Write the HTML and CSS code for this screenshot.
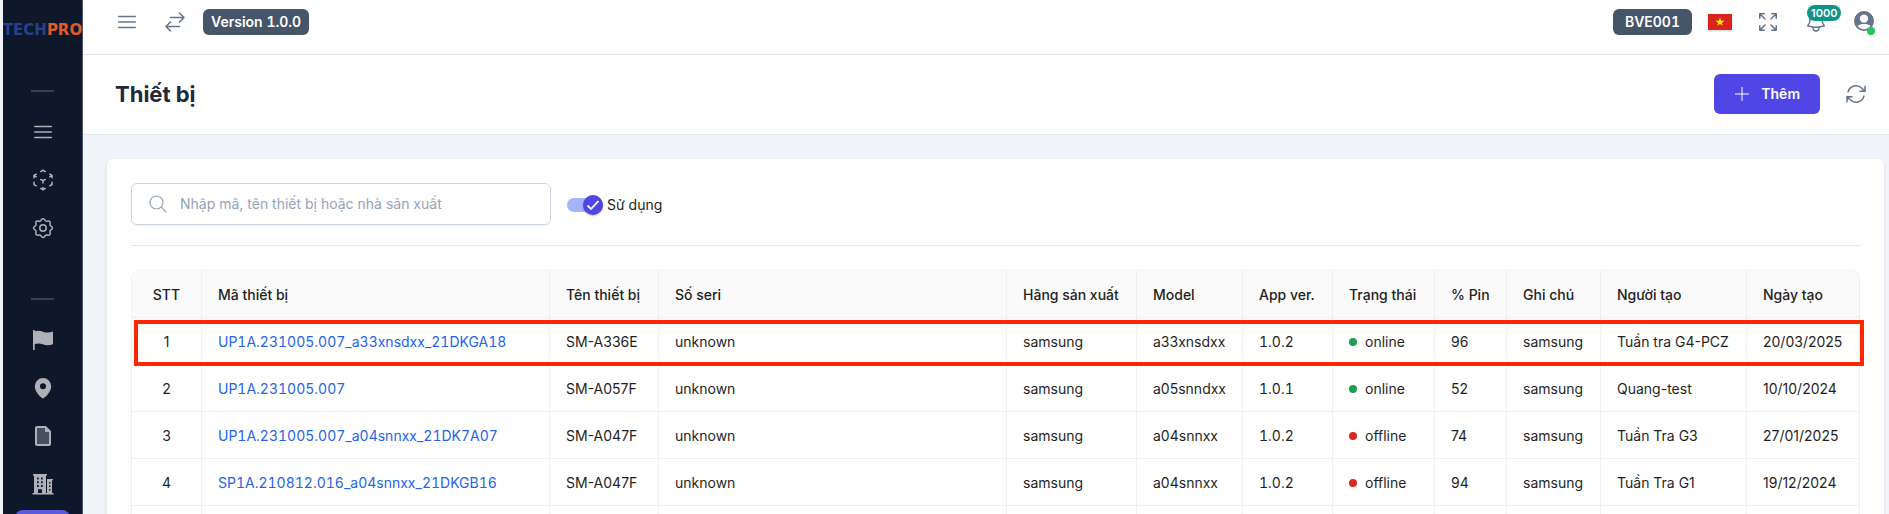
FILE: index.html
```html
<!DOCTYPE html>
<html lang="vi">
<head>
<meta charset="utf-8">
<meta name="viewport" content="width=device-width, initial-scale=1">
<title>Thiết bị</title>
<link rel="stylesheet" href="styles.css">
</head>
<body>
<div class="app">
  <nav class="sidebar" aria-label="Menu">
    <a class="logo" href="#"><span class="logo-tech">TECH</span><span class="logo-pro">PRO</span></a>
    <hr class="nav-rule">
    <ul class="nav-group">
      <li><a class="nav-item" href="#" aria-label="Danh mục"><svg class="icon" viewBox="0 0 24 24"><path d="M3.75 6.5h16.5M3.75 12h16.5M3.75 17.5h16.5"/></svg></a></li>
      <li><a class="nav-item" href="#" aria-label="Thiết bị"><svg class="icon" viewBox="0 0 24 24"><path d="M21 7.5l-2.25-1.313M21 7.5v2.25m0-2.25l-2.25 1.313M3 7.5l2.25-1.313M3 7.5l2.25 1.313M3 7.5v2.25m9 3l2.25-1.313M12 12.75l-2.25-1.313M12 12.75V15m0 6.75l2.25-1.313M12 21.75V19.5m0 2.25l-2.25-1.313m0-16.875L12 2.25l2.25 1.313M21 14.25v2.25l-2.25 1.313m-13.5 0L3 16.5v-2.25"/></svg></a></li>
      <li><a class="nav-item" href="#" aria-label="Cài đặt"><svg class="icon" viewBox="0 0 24 24"><circle cx="12" cy="12" r="3.2"/><path d="M12 2.7c1.4 0 1.7.8 2.2 1.8.4.7 1 .9 1.7.7 1.1-.3 1.9-.6 2.8.2.9 1 .6 1.8.3 2.8-.2.8 0 1.4.7 1.7 1 .5 1.7.9 1.7 2.1 0 1.3-.7 1.7-1.7 2.2-.7.3-.9.9-.7 1.7.3 1 .6 1.9-.3 2.8-.9.9-1.7.6-2.8.3-.7-.2-1.3 0-1.7.7-.5 1-.8 1.7-2.2 1.7-1.3 0-1.7-.7-2.2-1.7-.3-.7-.9-.9-1.7-.7-1 .3-1.9.6-2.8-.3-.9-.9-.6-1.8-.3-2.8.2-.8 0-1.4-.7-1.7-1-.5-1.7-.9-1.7-2.2 0-1.2.7-1.6 1.7-2.1.7-.3.9-.9.7-1.7-.3-1-.6-1.9.3-2.8.9-.8 1.8-.5 2.8-.2.8.2 1.4 0 1.7-.7.5-1 .9-1.8 2.200-1.8z"/></svg></a></li>
    </ul>
    <hr class="nav-rule">
    <ul class="nav-group">
      <li><a class="nav-item" href="#" aria-label="Cờ"><svg class="icon solid" viewBox="0 0 24 24"><path d="M2 2h1.700v1.300c3-1 5.200-.9 8.300.4 3.200 1.200 6.100 1.100 10-.2v12.700c-4 1.500-7 1.400-10.200.1-2.700-1.100-5-1.100-8.100-.3v6H2z"/></svg></a></li>
      <li><a class="nav-item" href="#" aria-label="Vị trí"><svg class="icon solid" viewBox="0 0 24 24"><path fill-rule="evenodd" d="M12 22.500c-.5 0-8.200-5.400-8.200-12.200a8.200 8.200 0 0 1 16.400 0c0 6.800-7.700 12.200-8.200 12.200zM12 13.200a3 3 0 1 0 0-6 3 3 0 0 0 0 6z"/></svg></a></li>
      <li><a class="nav-item" href="#" aria-label="Tài liệu"><svg class="icon" viewBox="0 0 24 24"><path class="doc" d="M6 3h8.500L19 7.500V20a1 1 0 0 1-1 1H6a1 1 0 0 1-1-1V4a1 1 0 0 1 1-1z"/><path class="fold" d="M14 3v5h5z"/></svg></a></li>
      <li><a class="nav-item" href="#" aria-label="Đơn vị"><svg class="icon solid" viewBox="0 0 24 24"><path fill-rule="evenodd" d="M2 2h14v1.500h-1V21h1V7h6v1.300h-1V21h1.500v1.500H1.500V21H3V3.500H2zM6 5.500v2h1.700v-2zM10 5.500v2h1.700v-2zM6 9.300v2h1.700v-2zM10 9.300v2h1.700v-2zM6 13v2h1.700v-2zM10 13v2h1.700v-2zM7 17.200V21h4v-3.800zM18 10v1.600h1.500V10zM18 13.500v1.600h1.500v-1.600zM18 17v1.600h1.500V17z"/></svg></a></li>
      <li><a class="nav-item active" href="#" aria-label="Mục đang chọn"></a></li>
    </ul>
  </nav>

  <div class="main">
    <header class="topbar">
      <div class="bar-side">
        <button class="icon-button" type="button" aria-label="Mở menu"><svg class="icon" viewBox="0 0 24 24"><path d="M3.75 6.5h16.5M3.75 12h16.5M3.75 17.5h16.5"/></svg></button>
        <button class="icon-button" type="button" aria-label="Chuyển đổi"><svg class="icon" viewBox="0 0 24 24"><path d="M7.5 21 3 16.5m0 0L7.5 12M3 16.5h13.5m0-13.5L21 7.5m0 0L16.5 12M21 7.5H7.5"/></svg></button>
        <span class="tag tag-version">Version 1.0.0</span>
      </div>
      <div class="bar-side">
        <span class="tag tag-user">BVE001</span>
        <button class="icon-button" type="button" aria-label="Tiếng Việt"><svg class="flag" viewBox="0 0 24 16"><rect width="24" height="16" fill="#da251d"/><path fill="#ff0" d="M12 3.4l1.06 3.23h3.4l-2.75 2 1.05 3.24L12 9.87l-2.76 2 1.05-3.24-2.75-2h3.4z"/></svg></button>
        <button class="icon-button" type="button" aria-label="Toàn màn hình"><svg class="icon" viewBox="0 0 24 24"><path d="M3.75 3.75v4.5m0-4.5h4.5m-4.5 0L9 9M3.75 20.25v-4.5m0 4.5h4.5m-4.5 0L9 15M20.25 3.75h-4.5m4.5 0v4.5m0-4.5L15 9m5.25 11.25h-4.5m4.5 0v-4.5m0 4.5L15 15"/></svg></button>
        <button class="icon-button" type="button" aria-label="Thông báo"><svg class="icon" viewBox="0 0 24 24"><path d="M14.857 17.082a23.848 23.848 0 0 0 5.454-1.31A8.967 8.967 0 0 1 18 9.75V9A6 6 0 0 0 6 9v.75a8.967 8.967 0 0 1-2.312 6.022c1.733.64 3.56 1.085 5.455 1.31m5.714 0a24.255 24.255 0 0 1-5.714 0m5.714 0a3 3 0 1 1-5.714 0"/></svg><span class="count">1000</span></button>
        <button class="icon-button" type="button" aria-label="Tài khoản"><svg class="icon solid" viewBox="0 0 24 24"><path fill-rule="evenodd" d="M12 1a10 10 0 1 0 0 20 10 10 0 0 0 0-20zM12 4.400a4.200 4.200 0 1 1 0 8.400A4.200 4.200 0 0 1 12 4.400zM5.500 16c1.500-1.400 3.900-2 6.500-2s5 .6 6.500 2c-1.500 2-3.900 3.200-6.500 3.200S7 18 5.500 16z"/></svg><span class="presence"></span></button>
      </div>
    </header>

    <div class="page-head">
      <h1>Thiết bị</h1>
      <div class="page-actions">
        <button class="add-button" type="button"><svg class="plus" viewBox="0 0 16 16"><path d="M8 1v14M1 8h14"/></svg>Thêm</button>
        <button class="icon-button" type="button" aria-label="Tải lại"><svg class="icon" viewBox="0 0 24 24"><path d="M16.023 9.348h4.992v-.001M2.985 19.644v-4.992m0 0h4.992m-4.993 0 3.181 3.183a8.25 8.25 0 0 0 13.803-3.7M4.031 9.865a8.25 8.25 0 0 1 13.803-3.7l3.181 3.182m0-4.991v4.99"/></svg></button>
      </div>
    </div>

    <main class="content">
      <section class="card">
        <form class="filters">
          <label class="search">
            <svg class="search-icon" viewBox="0 0 20 20"><circle cx="8.5" cy="8.5" r="6.5"/><path d="M13.2 13.2L18 18"/></svg>
            <input type="text" aria-label="Tìm kiếm" placeholder="Nhập mã, tên thiết bị hoặc nhà sản xuất">
          </label>
          <label class="switch">
            <input type="checkbox" checked>
            <span class="track"><span class="thumb"><svg viewBox="0 0 20 20"><path d="M4.5 10.5l3.5 3.5 7.5-8"/></svg></span></span>
            Sử dụng
          </label>
        </form>
        <table class="devices">
          <colgroup>
            <col class="c-no"><col><col class="c-name"><col><col class="c-maker"><col class="c-model"><col class="c-app"><col class="c-state"><col class="c-pin"><col class="c-note"><col class="c-author"><col class="c-date">
          </colgroup>
          <thead>
            <tr><th>STT</th><th>Mã thiết bị</th><th>Tên thiết bị</th><th>Số seri</th><th>Hãng sản xuất</th><th>Model</th><th>App ver.</th><th>Trạng thái</th><th>% Pin</th><th>Ghi chú</th><th>Người tạo</th><th>Ngày tạo</th></tr>
          </thead>
          <tbody>
            <tr class="marked"><td>1</td><td><a href="#">UP1A.231005.007_a33xnsdxx_21DKGA18</a></td><td>SM-A336E</td><td>unknown</td><td>samsung</td><td>a33xnsdxx</td><td class="release">1.0.2</td><td><span class="state online">online</span></td><td>96</td><td>samsung</td><td>Tuần tra G4-PCZ</td><td>20/03/2025</td></tr>
            <tr><td>2</td><td><a href="#">UP1A.231005.007</a></td><td>SM-A057F</td><td>unknown</td><td>samsung</td><td>a05snndxx</td><td class="release">1.0.1</td><td><span class="state online">online</span></td><td>52</td><td>samsung</td><td>Quang-test</td><td>10/10/2024</td></tr>
            <tr><td>3</td><td><a href="#">UP1A.231005.007_a04snnxx_21DK7A07</a></td><td>SM-A047F</td><td>unknown</td><td>samsung</td><td>a04snnxx</td><td class="release">1.0.2</td><td><span class="state offline">offline</span></td><td>74</td><td>samsung</td><td>Tuần Tra G3</td><td>27/01/2025</td></tr>
            <tr><td>4</td><td><a href="#">SP1A.210812.016_a04snnxx_21DKGB16</a></td><td>SM-A047F</td><td>unknown</td><td>samsung</td><td>a04snnxx</td><td class="release">1.0.2</td><td><span class="state offline">offline</span></td><td>94</td><td>samsung</td><td>Tuần Tra G1</td><td>19/12/2024</td></tr>
            <tr><td></td><td></td><td></td><td></td><td></td><td></td><td></td><td></td><td></td><td></td><td></td><td></td></tr>
          </tbody>
        </table>
      </section>
    </main>
  </div>
</div>
</body>
</html>
```
FILE: styles.css
```css
* { box-sizing: border-box; }

body {
  margin: 0;
  background: #f1f5f9;
  color: #1f1f1f;
  font-family: Inter, "Open Sans", sans-serif;
  font-size: 14px;
  line-height: 22px;
}

button, input { font: inherit; color: inherit; }
a { color: #2563eb; text-decoration: none; }

/* Codes and versions line up digit by digit */
.tag, .devices a, .release { font-variant-numeric: tabular-nums; }

.app {
  display: flex;
  height: 100vh;
  padding-left: 3px;
  overflow: hidden;
}

/* Sidebar */
.sidebar {
  display: flex;
  flex: none;
  flex-direction: column;
  width: 80px;
  overflow: hidden;
  background: #0f172a;
  border-right: 1px solid #475569;
}

.logo {
  display: flex;
  flex: none;
  align-items: center;
  justify-content: center;
  height: 60px;
  font-family: "DejaVu Sans", sans-serif;
  font-size: 15px;
  font-weight: 700;
}
.logo-tech { color: #27418c; }
.logo-pro { color: #e2592a; }

.nav-rule {
  flex: none;
  width: 23px;
  height: 2px;
  margin: 30px auto 18px;
  border: 0;
  background: #394252;
}
.nav-group + .nav-rule { margin-top: 48px; }

.nav-group {
  display: flex;
  flex: none;
  flex-direction: column;
  gap: 4px;
  margin: 0;
  padding: 0 12px;
  list-style: none;
}
.nav-item {
  display: flex;
  align-items: center;
  justify-content: center;
  height: 44px;
  border-radius: 8px;
  color: #afb1b8;
}
.nav-item.active { background: #5b5bdc; }

.icon {
  width: 24px;
  height: 24px;
  fill: none;
  stroke: currentColor;
  stroke-width: 1.5;
  stroke-linecap: round;
  stroke-linejoin: round;
}
.icon.solid { fill: currentColor; stroke: none; }
.icon .doc { fill: #475060; stroke-width: 2; }
.icon .fold { fill: currentColor; stroke: none; }

/* Top bar */
.main {
  display: flex;
  flex: 1;
  flex-direction: column;
  min-width: 0;
}

.topbar {
  display: flex;
  flex: none;
  justify-content: space-between;
  height: 54px;
  padding: 0 13px 10px 32px;
  background: #fff;
}
.bar-side {
  display: flex;
  align-items: center;
  gap: 16px;
}
.bar-side .icon-button + .icon-button { margin-left: 8px; }

.icon-button {
  position: relative;
  display: flex;
  align-items: center;
  justify-content: center;
  padding: 0;
  border: 0;
  background: none;
  color: #64748b;
}

.tag {
  padding: 2px 8px;
  border-radius: 6px;
  background: #475569;
  color: #fff;
  font-weight: 600;
}
.tag-user { padding: 2px 12px; }

.flag {
  width: 24px;
  height: 16px;
  box-shadow: 0 1px 2px rgba(0, 0, 0, 0.2);
}

.count {
  position: absolute;
  top: -5px;
  left: 3px;
  padding: 0 4px;
  border-radius: 8px;
  background: #0d9488;
  color: #fff;
  font-size: 11px;
  font-weight: 600;
  line-height: 16px;
}
.presence {
  position: absolute;
  right: 1px;
  bottom: -1px;
  width: 8px;
  height: 8px;
  border-radius: 50%;
  background: #22c55e;
}

/* Page heading */
.page-head {
  display: flex;
  flex: none;
  align-items: center;
  justify-content: space-between;
  height: 81px;
  padding: 0 21px 1px 32px;
  border-top: 1px solid #e5e7eb;
  border-bottom: 1px solid #e2e8f0;
  background: #fff;
}
h1 {
  margin: 0;
  color: #1e293b;
  font-size: 22px;
  font-weight: 700;
  line-height: 32px;
}
.page-actions {
  display: flex;
  align-items: center;
  gap: 24px;
}
.add-button {
  display: flex;
  align-items: center;
  gap: 11px;
  height: 40px;
  padding: 0 20px;
  border: 0;
  border-radius: 6px;
  background: #4f46e5;
  color: #fff;
  font-weight: 600;
}
.plus {
  width: 16px;
  height: 16px;
  fill: none;
  stroke: currentColor;
}

/* Content card */
.content { padding: 24px 5px 0 24px; }
.card {
  padding: 24px;
  border-radius: 6px;
  background: #fff;
  box-shadow: 0 1px 3px rgba(15, 23, 42, 0.12);
}

.filters {
  display: flex;
  align-items: center;
  gap: 16px;
  margin-bottom: 24px;
  padding-bottom: 20px;
  border-bottom: 1px solid #e2e8f0;
}
.search {
  display: flex;
  align-items: center;
  gap: 12px;
  width: 420px;
  height: 42px;
  padding: 0 16px;
  border: 1px solid #cbd5e1;
  border-radius: 6px;
  box-shadow: 0 1px 2px rgba(15, 23, 42, 0.06);
}
.search-icon {
  flex: none;
  width: 20px;
  height: 20px;
  fill: none;
  stroke: #94a3b8;
  stroke-width: 1.2;
  stroke-linecap: round;
}
.search input {
  flex: 1;
  min-width: 0;
  padding: 0;
  border: 0;
  outline: 0;
  background: none;
}
.search input::placeholder { color: #94a3b8; opacity: 1; }

.switch {
  position: relative;
  display: flex;
  align-items: center;
  gap: 4px;
  padding-top: 2px;
}
.switch input {
  position: absolute;
  width: 36px;
  height: 20px;
  margin: 0;
  opacity: 0;
}
.track {
  display: flex;
  align-items: center;
  justify-content: flex-end;
  width: 36px;
  height: 14px;
  border-radius: 7px;
  background: #a5b4fc;
}
.thumb {
  display: flex;
  width: 20px;
  height: 20px;
  border-radius: 50%;
  background: #4f46e5;
  box-shadow: 0 1px 2px rgba(0, 0, 0, 0.25);
}
.thumb svg {
  fill: none;
  stroke: #fff;
  stroke-width: 1.8;
}

/* Device table */
.devices {
  width: 100%;
  table-layout: fixed;
  border-collapse: separate;
  border-spacing: 0;
  border: solid #f0f0f0;
  border-width: 1px 0 0 1px;
  border-radius: 8px 8px 0 0;
}
.devices th, .devices td {
  height: 47px;
  padding: 13px 16px 11px;
  border: solid #f0f0f0;
  border-width: 0 1px 1px 0;
  font-weight: 400;
  text-align: left;
  white-space: nowrap;
}
.devices th { background: #fafafa; font-weight: 500; }
.devices th:first-child { border-top-left-radius: 8px; }
.devices th:last-child { border-top-right-radius: 8px; }
.devices th:first-child, .devices td:first-child { text-align: center; }

.c-no { width: 70px; }
.c-name { width: 109px; }
.c-maker { width: 130px; }
.c-model { width: 106px; }
.c-app { width: 90px; }
.c-state { width: 102px; }
.c-pin { width: 72px; }
.c-note { width: 94px; }
.c-author { width: 146px; }
.c-date { width: 113px; }

.state {
  display: flex;
  align-items: center;
  gap: 8px;
}
.state::before {
  content: "";
  width: 8px;
  height: 8px;
  border-radius: 50%;
}
.online::before { background: #16a34a; }
.offline::before { background: #dc2626; }

.marked { position: relative; }
.marked td:first-child::after {
  content: "";
  position: absolute;
  inset: 2px -4px -1px 2px;
  border: 4px solid #ff2600;
  pointer-events: none;
}
```
